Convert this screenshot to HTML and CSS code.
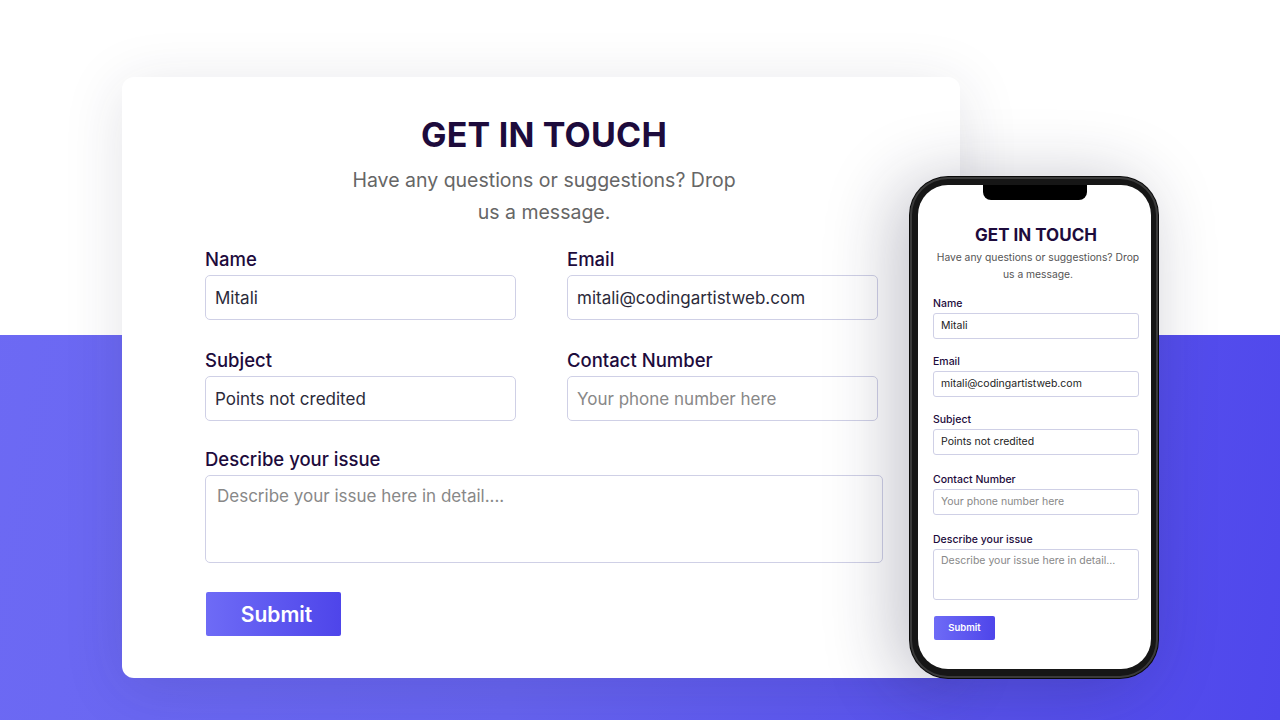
FILE: index.html
```html
<!DOCTYPE html>
<html lang="en">
<head>
<meta charset="utf-8">
<title>Get in touch</title>
<link rel="stylesheet" href="styles.css">
</head>
<body>
<main class="stage">
  <section class="card">
    <header class="head">
      <h1 class="title">GET IN TOUCH</h1>
      <p class="lead">Have any questions or suggestions? Drop us a message.</p>
    </header>
    <form class="form">
      <div class="grid">
        <label class="field">
          <span class="label">Name</span>
          <input class="input" type="text" value="Mitali">
        </label>
        <label class="field">
          <span class="label">Email</span>
          <input class="input" type="text" value="mitali@codingartistweb.com">
        </label>
        <label class="field">
          <span class="label">Subject</span>
          <input class="input" type="text" value="Points not credited">
        </label>
        <label class="field">
          <span class="label">Contact Number</span>
          <input class="input" type="text" placeholder="Your phone number here">
        </label>
      </div>
      <label class="field wide">
        <span class="label">Describe your issue</span>
        <textarea class="area" placeholder="Describe your issue here in detail...."></textarea>
      </label>
      <button class="submit" type="button">Submit</button>
    </form>
  </section>

  <div class="phone">
    <div class="screen">
      <div class="notch"></div>
      <h2 class="p-title">GET IN TOUCH</h2>
      <p class="p-lead">Have any questions or suggestions? Drop us a message.</p>
      <div class="p-form">
        <span class="p-label">Name</span>
        <div class="p-input">Mitali</div>
        <span class="p-label">Email</span>
        <div class="p-input">mitali@codingartistweb.com</div>
        <span class="p-label">Subject</span>
        <div class="p-input">Points not credited</div>
        <span class="p-label gap-lg">Contact Number</span>
        <div class="p-input ph">Your phone number here</div>
        <span class="p-label gap-lg">Describe your issue</span>
        <div class="p-input p-area ph">Describe your issue here in detail...</div>
        <div class="p-submit">Submit</div>
      </div>
    </div>
  </div>
</main>
</body>
</html>
```

FILE: styles.css
```css
* { box-sizing: border-box; }
html, body { margin: 0; padding: 0; }
body {
  width: 1280px;
  height: 720px;
  overflow: hidden;
  font-family: "Inter", "Noto Sans", "DejaVu Sans", sans-serif;
}
.stage {
  position: relative;
  width: 1280px;
  height: 720px;
  padding: 77px 0 0 122px;
  background:
    linear-gradient(to bottom, #ffffff 0, #ffffff 335px, transparent 335px),
    linear-gradient(100deg, #6d6af4 0%, #6663ef 45%, #4f47ec 100%);
}
.card {
  width: 838px;
  height: 601px;
  background: #fff;
  border-radius: 12px;
  box-shadow: 0 10px 60px rgba(40, 40, 70, 0.13);
  padding: 36px 77px 0 83px;
}
.head { text-align: center; }
.title {
  margin: 0;
  font-size: 34px;
  line-height: 44px;
  font-weight: 700;
  color: #1d0b3c;
  letter-spacing: 0.2px;
}
.lead {
  margin: 7px auto 0;
  width: 396px;
  font-size: 19.5px;
  line-height: 32px;
  color: #666;
}
.form { margin-top: 18px; }
.grid {
  display: grid;
  grid-template-columns: 311px 311px;
  column-gap: 51px;
  row-gap: 27px;
}
.field { display: flex; flex-direction: column; }
.label {
  font-size: 18.5px;
  line-height: 26px;
  font-weight: 500;
  color: #1d0b3c;
  margin-bottom: 3px;
}
.input, .area {
  font-family: inherit;
  border: 1px solid #cfd0e6;
  border-radius: 5px;
  background: #fff;
  outline: none;
}
.input {
  height: 45px;
  padding: 0 9px;
  font-size: 17px;
  color: #2b2a3a;
}
.input::placeholder, .area::placeholder { color: #888; }
.wide { margin-top: 25px; width: 678px; }
.area {
  height: 88px;
  resize: none;
  padding: 10px 11px;
  font-size: 17px;
  color: #2b2a3a;
}
.submit {
  margin-top: 29px;
  margin-left: 1px;
  width: 135px;
  height: 44px;
  border: none;
  border-radius: 2px;
  background: linear-gradient(90deg, #6e6bf6, #4e45ea);
  color: #fff;
  font-family: inherit;
  font-size: 21px;
  font-weight: 600;
  padding: 0 0 0 6px;
}

/* phone mockup */
.phone {
  position: absolute;
  left: 910px;
  top: 177px;
  width: 248px;
  height: 501px;
  border-radius: 38px;
  background: #161616;
  padding: 8px 7px 9px 8px;
  box-shadow: 0 0 0 1px #0a0a0a, inset 0 0 0 2px #3a3a3a, -14px 6px 70px rgba(30, 30, 60, 0.28);
}
.screen {
  position: relative;
  width: 100%;
  height: 100%;
  background: #fff;
  border-radius: 30px;
  padding: 39px 12px 0 15px;
  overflow: hidden;
}
.notch {
  position: absolute;
  left: 65px;
  top: 0;
  width: 104px;
  height: 15px;
  background: #000;
  border-radius: 0 0 8px 8px;
}
.p-title {
  margin: 0;
  text-align: center;
  font-size: 17px;
  line-height: 22px;
  font-weight: 700;
  color: #1d0b3c;
}
.p-lead {
  margin: 3px auto 0;
  width: 210px;
  text-align: center;
  font-size: 10.3px;
  line-height: 17px;
  color: #555;
}
.p-form {
  display: flex;
  flex-direction: column;
  align-items: flex-start;
  margin-top: 14px;
}
.p-label {
  font-size: 10.5px;
  line-height: 14px;
  font-weight: 500;
  color: #1d0b3c;
  margin-bottom: 2px;
}
.p-input + .p-label { margin-top: 16px; }
.p-input + .p-label.gap-lg { margin-top: 18px; }
.p-input {
  width: 206px;
  height: 26px;
  border: 1px solid #cfd0e6;
  border-radius: 3px;
  padding: 0 7px;
  font-size: 10.5px;
  line-height: 24px;
  color: #222;
}
.p-input.ph { color: #888; }
.p-area { height: 51px; line-height: 22px; }
.p-submit {
  margin-top: 16px;
  margin-left: 1px;
  width: 61px;
  height: 24px;
  border-radius: 2px;
  background: linear-gradient(90deg, #6e6bf6, #4e45ea);
  color: #fff;
  font-size: 9.5px;
  font-weight: 600;
  line-height: 24px;
  text-align: center;
}
```
